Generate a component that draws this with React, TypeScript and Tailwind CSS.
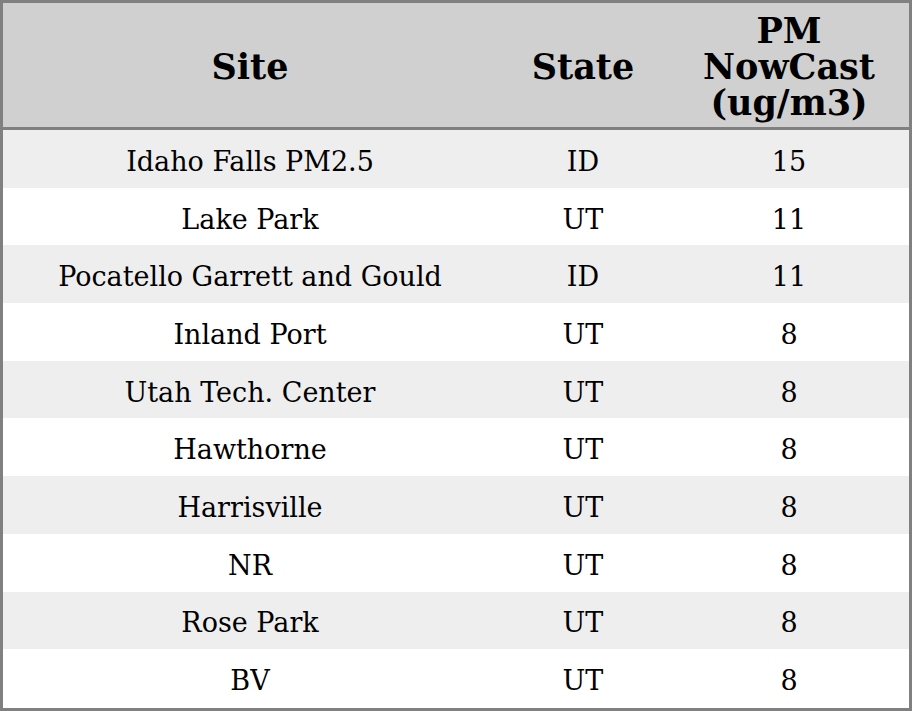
const rows: [string, string, string][] = [
  ["Idaho Falls PM2.5", "ID", "15"],
  ["Lake Park", "UT", "11"],
  ["Pocatello Garrett and Gould", "ID", "11"],
  ["Inland Port", "UT", "8"],
  ["Utah Tech. Center", "UT", "8"],
  ["Hawthorne", "UT", "8"],
  ["Harrisville", "UT", "8"],
  ["NR", "UT", "8"],
  ["Rose Park", "UT", "8"],
  ["BV", "UT", "8"],
];

export default function App() {
  return (
    <div className="w-[912px] h-[711px] border-[3px] border-[#808080] bg-white text-black font-['DejaVu_Serif',serif]">
      {/* Header */}
      <div className="grid grid-cols-[494px_172px_240px] h-[127px] bg-[#d0d0d0] border-b-[3px] border-[#808080] text-[35px] font-bold leading-[36px]">
        <div className="flex items-center justify-center text-center pt-[4px]">Site</div>
        <div className="flex items-center justify-center text-center pt-[4px]">State</div>
        <div className="flex items-center justify-center text-center pt-[4px]">
          PM
          <br />
          NowCast
          <br />
          (ug/m3)
        </div>
      </div>

      {/* Body */}
      {rows.map(([site, state, value], i) => (
        <div
          key={site}
          className={`grid grid-cols-[494px_172px_240px] h-[57.7px] text-[27px] leading-none ${
            i % 2 === 0 ? "bg-[#eeeeee]" : "bg-white"
          }`}
        >
          <div className="flex items-center justify-center pt-[5px]">{site}</div>
          <div className="flex items-center justify-center pt-[5px]">{state}</div>
          <div className="flex items-center justify-center pt-[5px]">{value}</div>
        </div>
      ))}
    </div>
  );
}
